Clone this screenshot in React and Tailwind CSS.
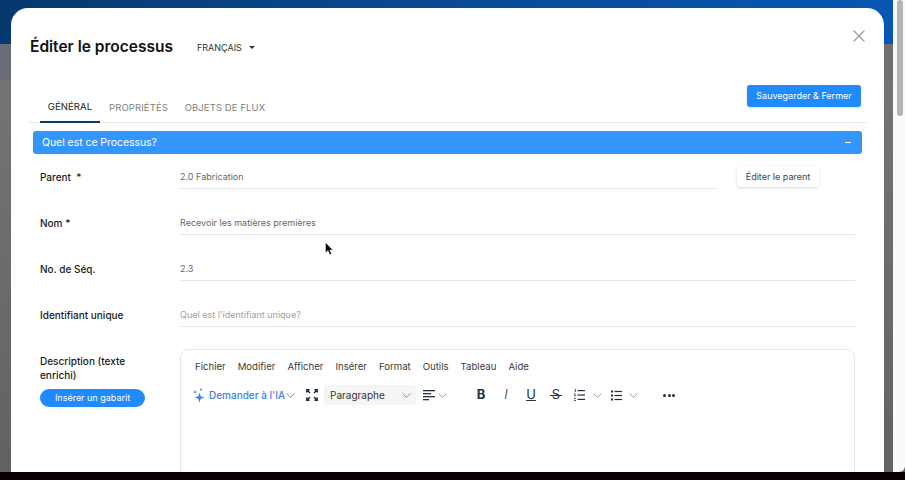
import React from "react";
import { ChevronDown, X } from "lucide-react";

const Field = ({ label, value, placeholder, children, wide }) => (
  <div className="flex h-[46px] items-start pr-[29px] pl-[29px]">
    <div className="w-[140px] pt-[13px] text-[10px] leading-[14px] font-medium whitespace-pre text-[#1a1a1a]">{label}</div>
    <div className={wide ? "flex w-[536px] flex-col" : "flex flex-1 flex-col"}>
      <div className={`h-[32px] border-b border-[#e6e6e6] pt-[13px] text-[9px] leading-[14px] ${placeholder ? "text-[#a0a0a0]" : "text-[#666666]"}`}>
        {value || placeholder}
      </div>
    </div>
    {children}
  </div>
);

const Chev = ({ className = "" }) => <ChevronDown size={15} strokeWidth={1.1} className={`shrink-0 ${className}`} />;

const Sparkle = () => (
  <svg width="12" height="15" viewBox="0 0 12 15" fill="#3b82e6" className="shrink-0">
    <path d="M6.5 4.5 L7.7 8.2 L11.5 9.5 L7.7 10.8 L6.5 14.8 L5.3 10.8 L1.5 9.5 L5.3 8.2 Z" />
    <path d="M2 2 L2.5 3.6 L4 4.1 L2.5 4.6 L2 6.2 L1.5 4.6 L0 4.1 L1.5 3.6 Z" />
    <circle cx="8" cy="1.4" r="1" />
  </svg>
);

const Expand = () => (
  <svg width="12" height="12" viewBox="0 0 12 12" fill="none" stroke="#222f3e" strokeWidth="1.5" className="shrink-0">
    <path d="M0.8 3.5V0.8h2.7M0.8 0.8l3.2 3.2M11.2 3.5V0.8H8.5M11.2 0.8L8 4M0.8 8.5v2.7h2.7M0.8 11.2L4 8M11.2 8.5v2.7H8.5M11.2 11.2L8 8" />
  </svg>
);

const AlignLeft = () => (
  <svg width="12" height="11" viewBox="0 0 12 11" fill="#222f3e" className="shrink-0">
    <rect width="12" height="1.3" /><rect y="3" width="8" height="1.3" /><rect y="6" width="12" height="1.3" /><rect y="9" width="6" height="1.3" />
  </svg>
);

const NumList = () => (
  <svg width="11" height="12" viewBox="0 0 11 12" fill="#222f3e" className="shrink-0">
    <rect x="3.5" y="1" width="7.5" height="1.2" /><rect x="3.5" y="5.4" width="7.5" height="1.2" /><rect x="3.5" y="9.8" width="7.5" height="1.2" />
    <rect x="0.8" y="0" width="0.9" height="3" /><rect x="0" y="4.6" width="1.8" height="0.9" /><rect x="0" y="6.4" width="1.8" height="0.9" /><rect x="0" y="9" width="1.8" height="0.9" /><rect x="0" y="11" width="1.8" height="0.9" />
  </svg>
);

const BulList = () => (
  <svg width="11" height="11" viewBox="0 0 11 11" fill="#222f3e" className="shrink-0">
    <rect x="3.5" y="0.9" width="7.5" height="1.2" /><rect x="3.5" y="4.9" width="7.5" height="1.2" /><rect x="3.5" y="8.9" width="7.5" height="1.2" />
    <rect y="0.5" width="2" height="2" /><rect y="4.5" width="2" height="2" /><rect y="8.5" width="2" height="2" />
  </svg>
);

const Fmt = ({ children, className = "" }) => (
  <span className={`relative flex w-[25px] justify-center text-[#222f3e] ${className}`}>{children}</span>
);

export default function App() {
  return (
    <div className="relative flex h-[480px] w-[905px] flex-col overflow-hidden bg-[#6f6f6f] font-['Inter','Liberation_Sans',sans-serif]">
      <div className="h-[44px] shrink-0 bg-gradient-to-r from-[#07386f] via-[#0a4a94] to-[#0656b4]" />
      <div className="h-[36px] shrink-0 bg-gradient-to-r from-[#686d78] to-[#6f6f6f]" />
      <div className="flex-1 bg-gradient-to-b from-[#747474] to-[#626262]" />
      <div className="h-[8px] shrink-0 bg-[#0a0002]" />
      <div className="absolute top-0 right-0 bottom-[8px] w-[12px] rounded-br-[6px] bg-[#fafafa]">
        <div className="ml-[4px] h-[116px] w-[6px] rounded-full bg-[#b5b5b5]" />
      </div>

      <div className="absolute top-[8px] left-[11px] h-[464px] w-[873px] overflow-hidden rounded-t-[17px] bg-white">
        <div className="flex h-[76px] items-start pt-[27px] pl-[19px]">
          <h1 className="text-[15.5px] leading-[24px] font-semibold text-[#111111]">Éditer le processus</h1>
          <div className="ml-[24px] flex h-[25px] items-center text-[9px] text-[#333333]">
            FRANÇAIS
            <span className="ml-[7px] h-0 w-0 border-x-[3px] border-t-[3px] border-x-transparent border-t-[#333333]" />
          </div>
          <X size={20} strokeWidth={1.6} className="absolute top-[18px] right-[15px] text-[#a0a0a0]" />
        </div>

        <div className="mx-[18px] flex h-[39px] items-start justify-between border-b border-[#e8e8e8] pr-[5px]">
          <div className="ml-[11px] flex h-[39px] items-stretch text-[9.5px] tracking-[0.1px] text-[#808080]">
            <div className="flex w-[60px] items-center justify-center border-b-[2px] border-[#0b3a70] pt-[9px] text-[#222222]">GÉNÉRAL</div>
            <div className="flex w-[77px] items-center justify-center pt-[9px]">PROPRIÉTÉS</div>
            <div className="flex w-[96px] items-center justify-center pt-[9px]">OBJETS DE FLUX</div>
          </div>
          <button className="mt-[1px] flex h-[22px] w-[114px] items-center justify-center rounded-[3px] bg-[#1f8bff] text-[9px] text-white shadow-sm">Sauvegarder &amp; Fermer</button>
        </div>

        <div className="mx-[22px] mt-[8px] flex h-[23px] items-center justify-between rounded-[3px] bg-[#3396ff] pr-[11px] pl-[9px] text-[10.4px] text-white">
          <span>Quel est ce Processus?</span>
          <span className="h-[1.5px] w-[6px] bg-white" />
        </div>

        <div className="mt-[3px]">
          <Field label="Parent  *" value="2.0 Fabrication" wide>
            <button className="mt-[9px] ml-[21px] flex h-[21px] w-[82px] items-center justify-center rounded-[3px] bg-white text-[9px] text-[#444444] shadow-[0_1px_3px_rgba(0,0,0,0.15)]">Éditer le parent</button>
          </Field>
          <Field label="Nom *" value="Recevoir les matières premières" />
          <Field label="No. de Séq." value="2.3" />
          <Field label="Identifiant unique" placeholder="Quel est l'identifiant unique?" />
        </div>

        <div className="mt-[8px] flex pr-[29px] pl-[29px]">
          <div className="w-[140px]">
            <div className="w-[100px] pt-[5px] text-[10px] leading-[14px] font-medium text-[#1a1a1a]">Description (texte enrichi)</div>
            <button className="mt-[7px] flex h-[18px] w-[105px] items-center justify-center rounded-full bg-[#1f8bff] text-[9px] text-white">Insérer un gabarit</button>
          </div>
          <div className="h-[200px] flex-1 rounded-t-[8px] border border-[#e8e8e8]">
            <div className="flex h-[34px] items-center gap-[12px] pl-[14px] text-[9.6px] text-[#3a3a3a]">
              <span>Fichier</span><span>Modifier</span><span>Afficher</span><span>Insérer</span><span>Format</span><span>Outils</span><span>Tableau</span><span>Aide</span>
            </div>
            <div className="mt-[1px] flex h-[20px] items-center pl-[12px]">
              <Sparkle />
              <span className="ml-[4px] w-[75px] text-[10px] font-medium whitespace-nowrap text-[#3b82e6]">Demander à l'IA</span>
              <Chev className="-ml-[1px] text-[#555555]" />
              <span className="ml-[8px]"><Expand /></span>
              <div className="ml-[6px] flex h-[20px] w-[92px] items-center justify-between rounded-[2px] bg-[#f5f5f5] pr-[2px] pl-[6px] text-[10px] text-[#333333]">
                Paragraphe <Chev className="text-[#666666]" />
              </div>
              <span className="ml-[7px]"><AlignLeft /></span>
              <Chev className="text-[#777777]" />
              <span className="ml-[18.5px] flex items-center text-[13px]">
                <Fmt className="font-bold">B</Fmt>
                <Fmt className="italic font-light">I</Fmt>
                <Fmt className="underline">U</Fmt>
                <Fmt>
                  S
                  <i className="absolute top-[50%] left-[6px] h-[1px] w-[12px] bg-[#222f3e]" />
                </Fmt>
              </span>
              <span className="ml-[5.5px]"><NumList /></span>
              <Chev className="ml-[5px] text-[#777777]" />
              <span className="ml-[6px]"><BulList /></span>
              <Chev className="ml-[4px] text-[#777777]" />
              <span className="ml-[22px] flex gap-[1.5px]">
                <i className="h-[3px] w-[3px] rounded-full bg-[#222f3e]" /><i className="h-[3px] w-[3px] rounded-full bg-[#222f3e]" /><i className="h-[3px] w-[3px] rounded-full bg-[#222f3e]" />
              </span>
            </div>
          </div>
        </div>
      </div>

      <svg className="absolute top-[242px] left-[325px]" width="9" height="14" viewBox="0 0 9 14">
        <path d="M0.5 0.5V11L3 8.6L4.8 12.8L6.6 12L4.8 8H8Z" fill="#000" stroke="#fff" strokeWidth="0.5" />
      </svg>
    </div>
  );
}
